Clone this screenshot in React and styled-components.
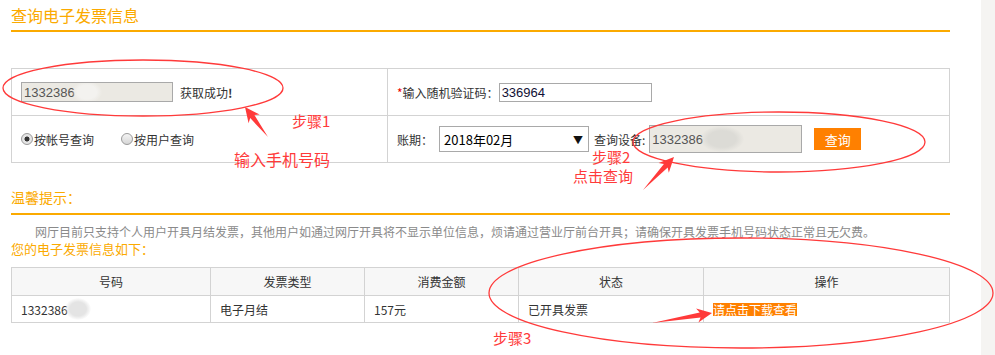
import React from "react";
import styled, { createGlobalStyle } from "styled-components";

const ORANGE = "#fbaa00";
const LINE = "#d3d3d3";
const RED = "#ff3a3a";

const GlobalStyle = createGlobalStyle`
  html, body {
    margin: 0;
    padding: 0;
    background: #fff;
  }
  body {
    font-family: "Noto Sans CJK SC", "Liberation Sans", sans-serif;
    font-size: 12px;
    color: #333;
  }
`;

const Page = styled.div`
  position: relative;
  display: flex;
  width: 995px;
  height: 355px;
  overflow: hidden;
`;

const Main = styled.div`
  width: 939px;
  padding-left: 11px;
`;

const ScrollStrip = styled.div`
  margin-left: auto;
  width: 14px;
  background: #f5f4f2;
`;

const Heading = styled.div`
  font-size: ${(p) => p.$size}px;
  line-height: ${(p) => p.$lh}px;
  margin-top: ${(p) => p.$mt || 0}px;
  color: ${ORANGE};
  border-bottom: ${(p) => (p.$rule ? `2px solid ${ORANGE}` : "none")};
`;

const FormGrid = styled.div`
  margin-top: 36px;
  display: grid;
  grid-template-columns: 376px 1fr;
  border-top: 1px solid ${LINE};
  border-left: 1px solid ${LINE};
`;

const FormCell = styled.div`
  box-sizing: border-box;
  height: 47px;
  border-right: 1px solid ${LINE};
  border-bottom: 1px solid ${LINE};
  display: flex;
  align-items: center;
  padding-left: 9px;
  gap: ${(p) => p.$gap || 0}px;
`;

const TextBox = styled.div`
  box-sizing: border-box;
  display: flex;
  align-items: center;
  width: ${(p) => p.$w}px;
  height: ${(p) => p.$h}px;
  border: 1px solid #a9a9a9;
  background: ${(p) => (p.$grey ? "#ebe9e3" : "#fff")};
  padding-left: 2px;
  font-family: "Liberation Sans", sans-serif;
  font-size: 13px;
  color: ${(p) => (p.$grey ? "#555" : "#101035")};
  overflow: hidden;
`;

const Blur = styled.span`
  display: inline-block;
  width: ${(p) => p.$w}px;
  height: ${(p) => p.$h}px;
  margin-left: -3px;
  border-radius: 50%;
  background: radial-gradient(ellipse at center, ${(p) => p.$c} 45%, rgba(255, 255, 255, 0) 72%);
`;

const Hint = styled.span`
  color: #333;
  font-size: 12px;
  margin-left: ${(p) => p.$ml || 0}px;
  margin-right: ${(p) => p.$mr || 0}px;
`;

const Star = styled.span`
  color: #e00;
  font-size: 12px;
`;

const RadioGroup = styled.label`
  display: flex;
  align-items: center;
  margin-right: ${(p) => p.$mr || 0}px;
  color: #333;
`;

const RadioDot = styled.span`
  box-sizing: border-box;
  width: 12px;
  height: 12px;
  border-radius: 50%;
  border: 1px solid #9a9a9a;
  background: ${(p) =>
    p.$on
      ? "radial-gradient(circle, #333 0 2.2px, #e4e4e4 2.8px)"
      : "linear-gradient(#f4f4f4, #d6d6d6)"};
  margin-right: 1px;
`;

const FakeSelect = styled.div`
  box-sizing: border-box;
  width: 150px;
  height: 26px;
  border: 1px solid #a9a9a9;
  display: flex;
  align-items: center;
  justify-content: space-between;
  padding: 0 5px 0 4px;
  font-size: 13px;
  color: #000;
`;

const Caret = styled.span`
  font-size: 10px;
  color: #111;
`;

const Button = styled.button`
  margin-left: 12px;
  width: 47px;
  height: 22px;
  border: 0;
  padding: 0;
  background: #ff8000;
  color: #fff;
  font-family: "Noto Sans CJK SC", sans-serif;
  font-size: 13px;
`;

const Notice = styled.p`
  margin: 9px 0 0;
  font-size: 12px;
  line-height: 16px;
  text-indent: 24px;
  color: #8a8a8a;
  white-space: nowrap;
`;

const Table = styled.div`
  margin-top: 9px;
  display: grid;
  grid-template-columns: 199px 154px 154px 185px 246px;
  border-top: 1px solid ${LINE};
  border-left: 1px solid ${LINE};
`;

const Th = styled.div`
  box-sizing: border-box;
  height: 28px;
  border-right: 1px solid ${LINE};
  border-bottom: 1px solid ${LINE};
  background: #f7f7f7;
  display: flex;
  align-items: center;
  justify-content: center;
  color: #333;
`;

const Td = styled.div`
  box-sizing: border-box;
  height: 27px;
  border-right: 1px solid ${LINE};
  border-bottom: 1px solid ${LINE};
  display: flex;
  align-items: center;
  padding-left: 9px;
  color: #333;
`;

const Download = styled.a`
  background: #ff8000;
  color: #fff;
  line-height: 13px;
  text-decoration: none;
`;

const Overlay = styled.svg`
  position: absolute;
  left: 0;
  top: 0;
  pointer-events: none;
`;

const Note = styled.span`
  position: absolute;
  left: ${(p) => p.$x}px;
  top: ${(p) => p.$y}px;
  font-size: ${(p) => p.$size || 15}px;
  line-height: 1;
  color: ${RED};
  white-space: nowrap;
`;

function arrowPoints([tx, ty], [px, py], head = 15, half = 7, neck = 2.6) {
  const dx = px - tx;
  const dy = py - ty;
  const len = Math.hypot(dx, dy);
  const ux = dx / len;
  const uy = dy / len;
  const nx = -uy;
  const ny = ux;
  const bx = px - ux * head;
  const by = py - uy * head;
  const nbx = px - ux * (head - 3);
  const nby = py - uy * (head - 3);
  return [
    [tx, ty],
    [nbx + nx * neck, nby + ny * neck],
    [bx + nx * half, by + ny * half],
    [px, py],
    [bx - nx * half, by - ny * half],
    [nbx - nx * neck, nby - ny * neck],
  ]
    .map((p) => p.map((v) => v.toFixed(1)).join(","))
    .join(" ");
}

const ellipses = [
  { cx: 143, cy: 88, rx: 140, ry: 28 },
  { cx: 779, cy: 142, rx: 146, ry: 30 },
  { cx: 741, cy: 293, rx: 252, ry: 55 },
];

const arrows = [
  { from: [268, 137], to: [245, 107] },
  { from: [643, 190], to: [674, 157] },
  { from: [652, 323], to: [712, 313] },
];

const headers = ["号码", "发票类型", "消费金额", "状态", "操作"];

export default function App() {
  return (
    <Page>
      <GlobalStyle />
      <Main>
        <Heading $size={16} $lh={30} $rule>
          查询电子发票信息
        </Heading>

        <FormGrid>
          <FormCell $gap={7}>
            <TextBox $w={152} $h={20} $grey>
              1332386
              <Blur $w={30} $h={22} $c="#f3f2ef" />
            </TextBox>
            <Hint>获取成功<b>!</b></Hint>
          </FormCell>
          <FormCell>
            <Star>*</Star>
            <Hint>输入随机验证码：</Hint>
            <TextBox $w={153} $h={19}>336964</TextBox>
          </FormCell>
          <FormCell>
            <RadioGroup $mr={27}>
              <RadioDot $on />
              按帐号查询
            </RadioGroup>
            <RadioGroup>
              <RadioDot />
              按用户查询
            </RadioGroup>
          </FormCell>
          <FormCell>
            <Hint $mr={6}>账期：</Hint>
            <FakeSelect>
              2018年02月
              <Caret>▼</Caret>
            </FakeSelect>
            <Hint $ml={5} $mr={4}>查询设备:</Hint>
            <TextBox $w={153} $h={28} $grey>
              1332386
              <Blur $w={44} $h={26} $c="#dcdbd6" />
            </TextBox>
            <Button>查询</Button>
          </FormCell>
        </FormGrid>

        <Heading $size={14} $lh={32} $mt={18} $rule>
          温馨提示：
        </Heading>
        <Notice>
          网厅目前只支持个人用户开具月结发票，其他用户如通过网厅开具将不显示单位信息，烦请通过营业厅前台开具；请确保开具发票手机号码状态正常且无欠费。
        </Notice>
        <Heading $size={13} $lh={18}>
          您的电子发票信息如下：
        </Heading>

        <Table>
          {headers.map((h) => (
            <Th key={h}>{h}</Th>
          ))}
          <Td>
            1332386
            <Blur $w={26} $h={22} $c="#e4e4e4" />
          </Td>
          <Td>电子月结</Td>
          <Td>157元</Td>
          <Td>已开具发票</Td>
          <Td>
            <Download href="#">请点击下载查看</Download>
          </Td>
        </Table>
      </Main>
      <ScrollStrip />

      <Overlay width="995" height="355" viewBox="0 0 995 355">
        {ellipses.map((e, i) => (
          <ellipse key={i} {...e} fill="none" stroke={RED} strokeWidth="1.3" />
        ))}
        {arrows.map((a, i) => (
          <polygon key={i} points={arrowPoints(a.from, a.to)} fill={RED} />
        ))}
      </Overlay>
      <Note $x={292} $y={113}>步骤1</Note>
      <Note $x={234} $y={151} $size={16}>输入手机号码</Note>
      <Note $x={592} $y={149}>步骤2</Note>
      <Note $x={573} $y={168}>点击查询</Note>
      <Note $x={493} $y={330}>步骤3</Note>
    </Page>
  );
}
